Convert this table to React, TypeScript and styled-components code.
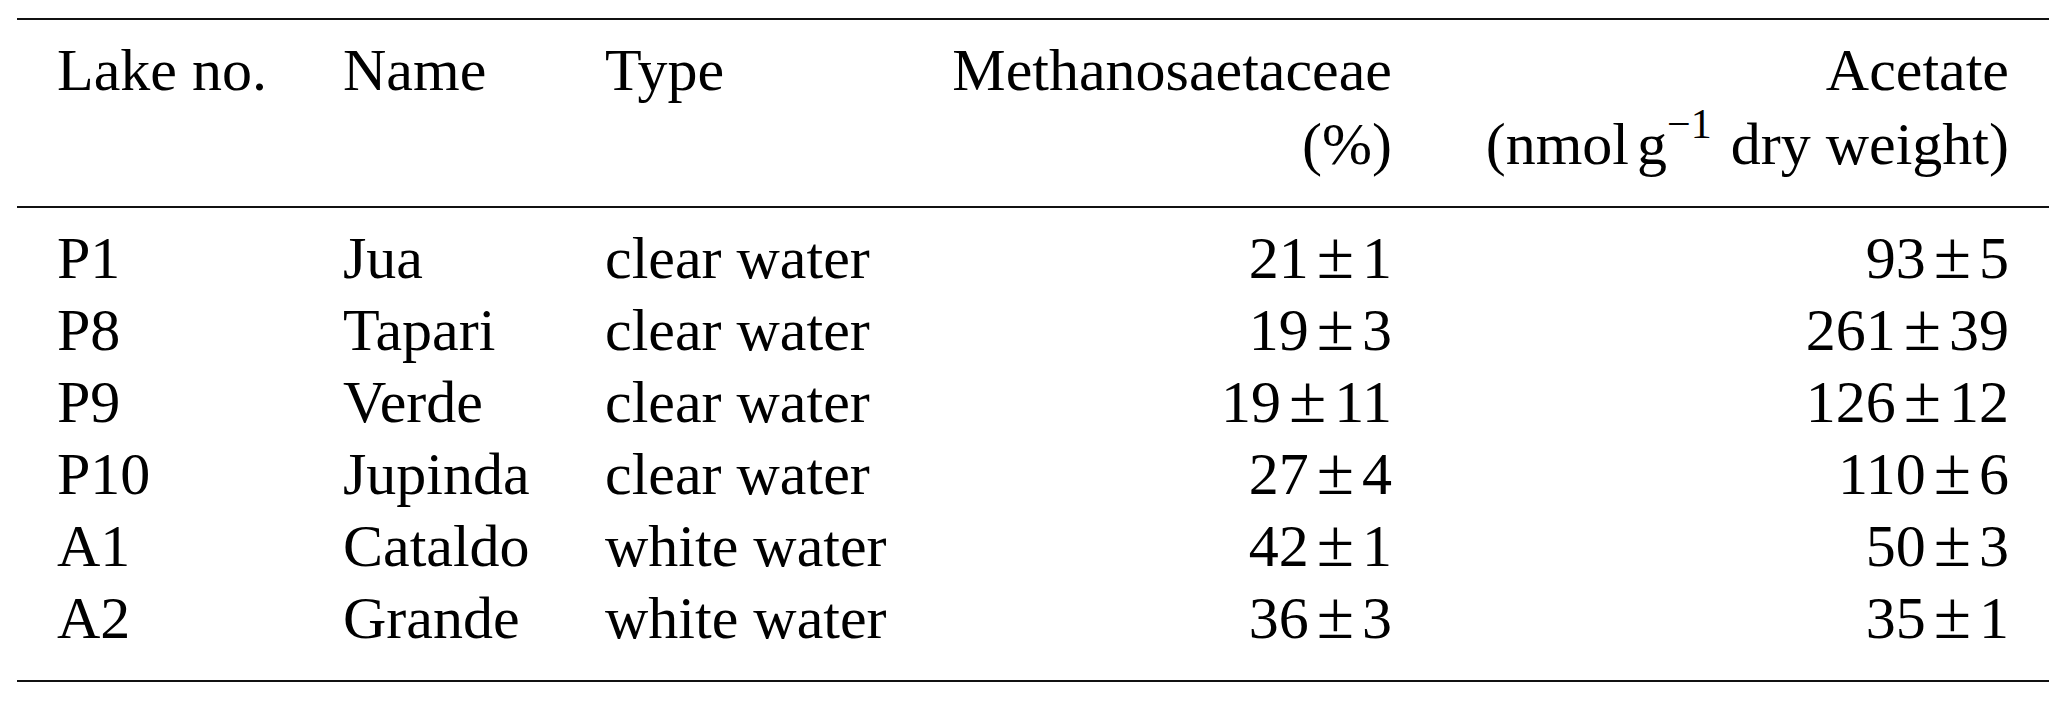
import React from "react";
import styled, { createGlobalStyle } from "styled-components";

const Global = createGlobalStyle`
  html, body {
    margin: 0;
    padding: 0;
    background: #ffffff;
  }
  body {
    font-family: "Liberation Serif", "Times New Roman", serif;
    color: #000;
  }
`;

const Page = styled.div`
  padding: 18px 18px 0 17px;
  width: 2067px;
  box-sizing: border-box;
`;

const Table = styled.table`
  width: 2032px;
  table-layout: fixed;
  border-collapse: collapse;
  font-family: "Liberation Serif", "Times New Roman", serif;
  font-size: 60px;
  line-height: 72px;
  color: #000;
`;

const Col = styled.col<{ $w: number }>`
  width: ${(p) => p.$w}px;
`;

const Head = styled.thead`
  border-top: 2px solid #111;
  border-bottom: 2px solid #111;
`;

const Body = styled.tbody`
  border-bottom: 2px solid #111;
`;

const HeadCell = styled.th<{ $align: "left" | "right" }>`
  font-weight: normal;
  text-align: ${(p) => p.$align};
  vertical-align: top;
  padding: 14px 40px 26px 40px;
  white-space: nowrap;
`;

const Line = styled.span<{ $second?: boolean }>`
  display: block;
  height: 72px;
  margin-top: ${(p) => (p.$second ? "2px" : "0")};
`;

const Row = styled.tr`
  &:first-child td {
    padding-top: 14px;
  }
  &:last-child td {
    padding-bottom: 26px;
  }
`;

const Cell = styled.td<{ $align: "left" | "right" }>`
  text-align: ${(p) => p.$align};
  padding: 0 40px;
  height: 72px;
  white-space: nowrap;
`;

const Sup = styled.span`
  font-size: 42px;
  line-height: 0;
  vertical-align: 26px;
  margin-right: 4px;
`;

const Unit = styled.span`
  margin-left: -4px;
`;

const Pm = styled.span`
  font-size: 68px;
  line-height: 0;
  margin: 0 8px;
`;

type Rec = { no: string; name: string; type: string; m: [string, string]; a: [string, string] };

const rows: Rec[] = [
  { no: "P1", name: "Jua", type: "clear water", m: ["21", "1"], a: ["93", "5"] },
  { no: "P8", name: "Tapari", type: "clear water", m: ["19", "3"], a: ["261", "39"] },
  { no: "P9", name: "Verde", type: "clear water", m: ["19", "11"], a: ["126", "12"] },
  { no: "P10", name: "Jupinda", type: "clear water", m: ["27", "4"], a: ["110", "6"] },
  { no: "A1", name: "Cataldo", type: "white water", m: ["42", "1"], a: ["50", "3"] },
  { no: "A2", name: "Grande", type: "white water", m: ["36", "3"], a: ["35", "1"] },
];

const Value = ({ v }: { v: [string, string] }) => (
  <>
    {v[0]}
    <Pm>±</Pm>
    {v[1]}
  </>
);

export default function App() {
  return (
    <>
      <Global />
      <Page>
        <Table>
          <colgroup>
            <Col $w={286} />
            <Col $w={262} />
            <Col $w={335} />
            <Col $w={532} />
            <Col $w={617} />
          </colgroup>
          <Head>
            <tr>
              <HeadCell $align="left">
                <Line>Lake no.</Line>
              </HeadCell>
              <HeadCell $align="left">
                <Line>Name</Line>
              </HeadCell>
              <HeadCell $align="left">
                <Line>Type</Line>
              </HeadCell>
              <HeadCell $align="right">
                <Line>Methanosaetaceae</Line>
                <Line $second>(%)</Line>
              </HeadCell>
              <HeadCell $align="right">
                <Line>Acetate</Line>
                <Line $second>
                  (nmol<Unit>{"\u2009"}g</Unit>
                  <Sup>{"\u22121"}</Sup> dry weight)
                </Line>
              </HeadCell>
            </tr>
          </Head>
          <Body>
            {rows.map((r) => (
              <Row key={r.no}>
                <Cell $align="left">{r.no}</Cell>
                <Cell $align="left">{r.name}</Cell>
                <Cell $align="left">{r.type}</Cell>
                <Cell $align="right">
                  <Value v={r.m} />
                </Cell>
                <Cell $align="right">
                  <Value v={r.a} />
                </Cell>
              </Row>
            ))}
          </Body>
        </Table>
      </Page>
    </>
  );
}
